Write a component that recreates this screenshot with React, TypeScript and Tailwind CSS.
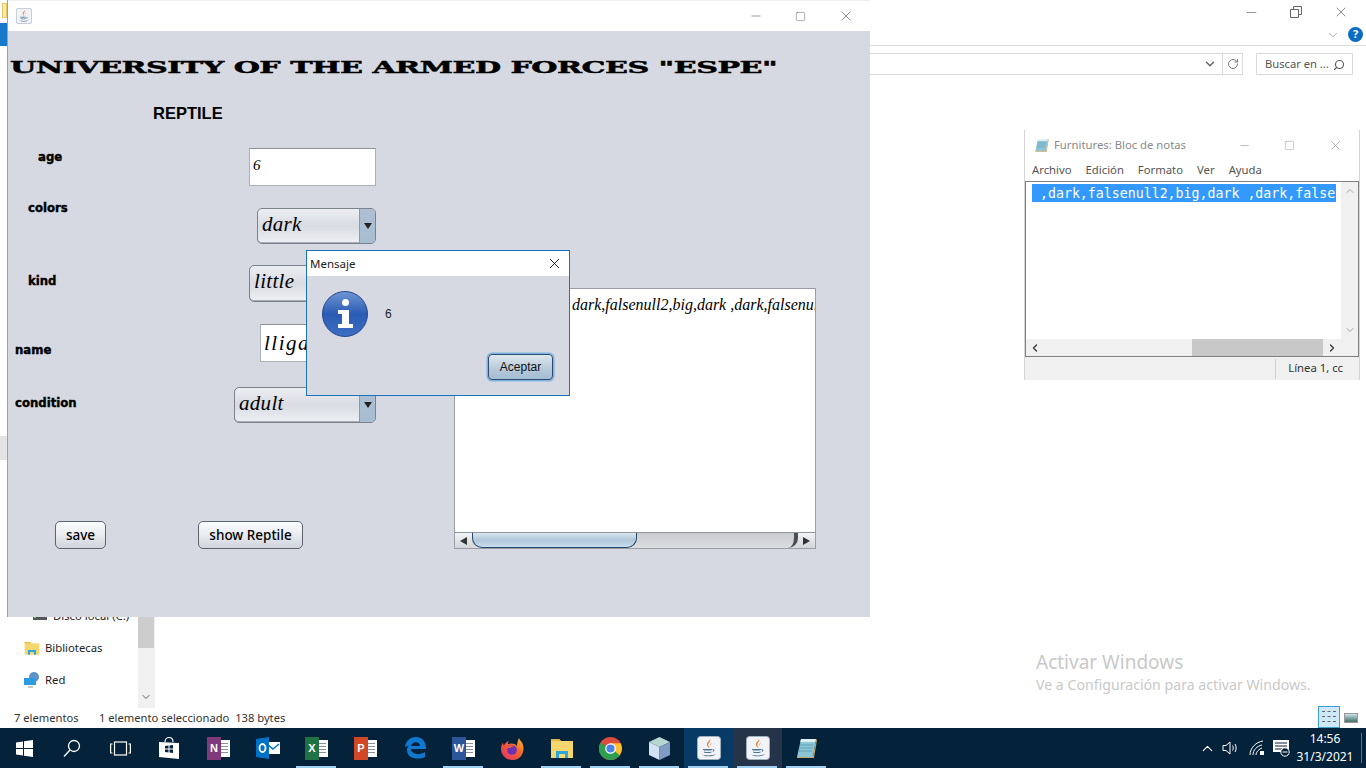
import React from 'react'
import { ChevronDown, ChevronLeft, ChevronRight, ChevronUp, Minus, RotateCw, Search, Square, X } from 'lucide-react'

const ui = "font-['Noto_Sans',sans-serif]"
const script = "font-['Liberation_Serif',serif] italic"
const heavy = "font-['DejaVu_Sans_Condensed','DejaVu_Sans',sans-serif] font-bold [-webkit-text-stroke:0.4px_black]"

const JavaIcon: React.FC<{ size?: number }> = ({ size = 24 }) => (
  <svg width={size} height={size} viewBox="0 0 24 24">
    <rect x="0.5" y="0.5" width="23" height="23" rx="3" fill="#f1f3f6" stroke="#9fb0bf" />
    <path d="M13 3c1.500 2.500-3 4-1.500 7 .4.800 1 1.300 1 2-1.500-1-3-2.500-2.500-4.500C10.500 5.500 13 5 13 3z" fill="#e8772e" />
    <path d="M15 6.500c-1.500 1-2 2-1.300 3.500-.1-1.300.5-2.300 1.300-3.500z" fill="#e8772e" />
    <path d="M6 13h9v1c-2 .8-7 .8-9 0zM7 15.500c2 .7 5.500.7 7.500 0v1c-2 .7-5.500.7-7.500 0zM5 18.500c3 1.300 10 1.300 14-.5-2 2.700-11 3.300-14 .5z" fill="#4b7396" />
    <path d="M15 13.500c3-.8 3.500 2-.5 3 2-1 2.300-2.500.5-3z" fill="#4b7396" />
  </svg>
)

const NotepadIcon: React.FC<{ size?: number }> = ({ size = 24 }) => (
  <svg width={size} height={size} viewBox="0 0 24 24">
    <path d="M6 3h15l-3 18H2z" fill="#8cc6d6" />
    <path d="M6 3h15l-.5 3H5.300z" fill="#dfeef2" />
    <path d="M21 3l1 1-3 18H2l0-1h16z" fill="#c9a566" />
    <path d="M5 9h13M4.500 12h13M4 15h13" stroke="#5ea2b6" strokeWidth="1" />
  </svg>
)

const FolderIcon: React.FC<{ size?: number }> = ({ size = 24 }) => (
  <svg width={size} height={size} viewBox="0 0 24 24">
    <path d="M1 3h8l2 2h12v17H1z" fill="#f6d76f" />
    <path d="M1 3h8l2 2H1z" fill="#e5b93f" />
    <path d="M6 22v-7h12v7h-3v-4H9v4z" fill="#29a8e0" />
  </svg>
)

const TaskbarIcons: React.FC = () => (
  <>
    <TaskSlot className="w-[48px]">
      <svg width="17" height="17" viewBox="0 0 17 17" fill="#fff">
        <path d="M0 2.500l7-1v6.500H0zM8 1.300L17 0v8H8zM0 9h7v6.500l-7-1zM8 9h9v8l-9-1.300z" />
      </svg>
    </TaskSlot>
    <TaskSlot className="w-[48px]">
      <svg width="18" height="18" viewBox="0 0 18 18" fill="none" stroke="#fff" strokeWidth="1.300">
        <circle cx="11" cy="7" r="5.500" />
        <path d="M7 11l-6 6.500" />
      </svg>
    </TaskSlot>
    <TaskSlot className="w-[48px]">
      <svg width="21" height="15" viewBox="0 0 21 15" fill="none" stroke="#fff" strokeWidth="1.200">
        <rect x="4.500" y="1" width="12" height="13" />
        <path d="M2.500 3H.6v9h1.900M18.500 3h1.900v9h-1.900" />
      </svg>
    </TaskSlot>
    <TaskSlot className="w-[50px]">
      <svg width="22" height="24" viewBox="0 0 22 24">
        <path d="M7 6c0-6 8-6 8 0" fill="none" stroke="#fff" strokeWidth="1.200" />
        <path d="M1 6l20 1v16L1 21z" fill="#fff" />
        <path d="M7 10l3.500-.5v3H7zM11.500 9.500L15 9v3.500h-3.500zM7 13.500h3.500v3L7 16zM11.500 13.500H15V17l-3.500-.5z" fill="#04223a" />
      </svg>
    </TaskSlot>
    <TaskSlot className="w-[49px]">
      <OfficeIcon dark="#80397b" letter="N" />
    </TaskSlot>
    <TaskSlot className="w-[49px]">
      <svg width="24" height="22" viewBox="0 0 24 22">
        <rect x="10" y="5" width="14" height="12" fill="#fff" />
        <path d="M11 7l6 5 6-5" fill="none" stroke="#0072c6" strokeWidth="1.500" />
        <path d="M0 2l13-2v22L0 20z" fill="#0072c6" />
        <ellipse cx="6.500" cy="11" rx="3" ry="4" fill="none" stroke="#fff" strokeWidth="1.800" />
      </svg>
    </TaskSlot>
    <TaskSlot className="w-[49px]" open>
      <OfficeIcon dark="#1f7244" letter="X" />
    </TaskSlot>
    <TaskSlot className="w-[49px]">
      <OfficeIcon dark="#d24726" letter="P" />
    </TaskSlot>
    <TaskSlot className="w-[49px]">
      <svg width="22" height="22" viewBox="0 0 22 22">
        <path d="M1 10C2 3 7 0 12 0c6 0 10 4 10 12H7c0 5 8 7 14 3v5c-7 3-17 2-18-6-.3-2 .5-4 2-6-1.500 1-3 2-4 2zm6-1h9c0-5-8-5-9 0z" fill="#0f79d0" />
      </svg>
    </TaskSlot>
    <TaskSlot className="w-[49px]" open>
      <OfficeIcon dark="#2b579a" letter="W" />
    </TaskSlot>
    <TaskSlot className="w-[49px]">
      <svg width="23" height="23" viewBox="0 0 23 23">
        <defs>
          <linearGradient id="ff" x1="0" y1="1" x2="1" y2="0">
            <stop offset="0" stopColor="#e6316b" />
            <stop offset="0.6" stopColor="#f4642c" />
            <stop offset="1" stopColor="#fdc62f" />
          </linearGradient>
        </defs>
        <path d="M18 1c.5 2 2 3 3.500 5.500C24 12 22 23 11.500 23 4 23 0 17 0 12c0-3 1-5 2-6.500 0 1.500.5 2.500 1 3C4 6 6 4.500 8 4c-1 1-1.500 2-1 3 3-1 7-1 9 2 0-3 1-6 2-8z" fill="url(#ff)" />
        <circle cx="11" cy="13" r="4.800" fill="#6d2fb5" />
        <path d="M6 11c2-2 5-3 8-2-2 0-4 1-5 2z" fill="#f4642c" />
      </svg>
    </TaskSlot>
    <TaskSlot className="w-[49px]" open>
      <FolderIcon />
    </TaskSlot>
    <TaskSlot className="w-[49px]" open>
      <svg width="23" height="23" viewBox="0 0 48 48">
        <circle cx="24" cy="24" r="24" fill="#dd4b3e" />
        <path d="M24 24L45 36A24 24 0 0 1 19 47.500z" fill="#2f9e4f" />
        <path d="M3 12A24 24 0 0 0 19 47.500L30 27z" fill="#2f9e4f" />
        <path d="M24 13h21a24 24 0 0 1-2 25L30 27z" fill="#fbc02d" />
        <circle cx="24" cy="24" r="11" fill="#fff" />
        <circle cx="24" cy="24" r="8.500" fill="#4a80e8" />
      </svg>
    </TaskSlot>
    <TaskSlot className="w-[49px]" open>
      <svg width="21" height="23" viewBox="0 0 21 23">
        <path d="M10.500 0L21 5l-10.500 5L0 5z" fill="#b6d6cf" />
        <path d="M0 5l10.500 5v13L0 18z" fill="#d4e0f4" />
        <path d="M21 5l-10.500 5v13L21 18z" fill="#7f9dc4" />
      </svg>
    </TaskSlot>
    <TaskSlot className="w-[49px] bg-[#083a66]" open>
      <JavaIcon />
    </TaskSlot>
    <TaskSlot className="w-[49px] bg-[#253448]" open>
      <JavaIcon />
    </TaskSlot>
    <TaskSlot className="w-[49px]" open>
      <NotepadIcon />
    </TaskSlot>
  </>
)

const TaskSlot: React.FC<{ className?: string; open?: boolean; children: React.ReactNode }> = ({
  className = '',
  open,
  children,
}) => (
  <div className={`h-full flex items-center justify-center shrink-0 relative ${className}`}>
    {children}
    {open && <span className="absolute bottom-0 left-[4px] right-[5px] h-[2px] bg-[#9fd0f2]" />}
  </div>
)

const OfficeIcon: React.FC<{ dark: string; letter: string }> = ({ dark, letter }) => (
  <div className="relative w-[23px] h-[23px]">
    <div className="absolute right-0 top-[3px] w-[15px] h-[17px] bg-white" />
    <div className="absolute right-[2px] top-[6px] w-[7px] h-[1px] bg-[#8a8f99]" />
    <div className="absolute right-[2px] top-[9px] w-[7px] h-[1px] bg-[#8a8f99]" />
    <div className="absolute right-[2px] top-[12px] w-[7px] h-[1px] bg-[#8a8f99]" />
    <div className="absolute right-[2px] top-[15px] w-[7px] h-[1px] bg-[#8a8f99]" />
    <div
      className="absolute left-0 top-0 w-[14px] h-[23px] flex items-center justify-center text-white text-[11px] font-bold font-['Liberation_Sans',sans-serif]"
      style={{ backgroundColor: dark }}
    >
      {letter}
    </div>
  </div>
)

const Taskbar: React.FC = () => (
  <div className="h-[40px] shrink-0 bg-[#04223a] flex items-center">
    <TaskbarIcons />
    <div className="flex-1" />
    <div className="flex items-center text-white">
      <ChevronUp size={17} strokeWidth={1.500} />
      <svg className="ml-[6px]" width="18" height="16" viewBox="0 0 18 16" fill="none" stroke="#fff" strokeWidth="1">
        <path d="M1 5.500h3L8 2v12l-4-3.500H1z" />
        <path d="M10.500 5.500c1 1.500 1 3.500 0 5M13 4c1.500 2.500 1.500 5.500 0 8" />
      </svg>
      <svg className="ml-[9px]" width="16" height="16" viewBox="0 0 16 16" fill="none" stroke="#fff" strokeWidth="1">
        <path d="M1 15C1 8 7 2 14 1M4 15c0-5 4-9 9-10M7 15c0-3 3-6 6-7" />
        <rect x="11" y="11" width="4" height="4" fill="#fff" stroke="none" />
      </svg>
      <svg className="ml-[8px]" width="17" height="17" viewBox="0 0 17 17">
        <path d="M0 0h16v12H0z" fill="#fff" />
        <path d="M2 3h12M2 6h12M2 9h8" stroke="#04223a" />
        <circle cx="12" cy="12" r="4.200" fill="#04223a" stroke="#fff" />
        <path d="M9.500 12h5" stroke="#fff" />
      </svg>
    </div>
    <div className={`w-[70px] text-center text-white text-[12px] leading-[18px] ${ui}`}>
      <div>14:56</div>
      <div>31/3/2021</div>
    </div>
    <div className="w-[1px] h-[30px] ml-[1px] mr-[4px] bg-[#5d7284]" />
  </div>
)

const ExplorerBackground: React.FC = () => (
  <div className={`flex-1 min-h-0 flex flex-col bg-white text-[12px] text-[#1e1e1e] ${ui}`}>
    <div className="h-[24px] flex items-center justify-end pr-[17px] gap-[31px] text-[#555]">
      <Minus size={15} strokeWidth={1} />
      <svg width="12" height="12" viewBox="0 0 12 12" fill="none" stroke="#666" strokeWidth="1">
        <path d="M.5 3.500h8v8h-8zM3.500 3.500v-3h8v8h-3" />
      </svg>
      <X size={16} strokeWidth={1} />
    </div>
    <div className="h-[22px] flex items-center justify-end pr-[3px] border-b border-[#dcdcdc] relative">
      <ChevronDown size={14} strokeWidth={1.200} className="text-[#888] mr-[8px]" />
      <span className="w-[15px] h-[15px] rounded-full bg-[#0b6cc4] text-white text-[11px] font-bold flex items-center justify-center">
        ?
      </span>
    </div>
    <div className="h-[22px] mt-[7px] flex shrink-0">
      <div className="ml-[870px] w-[373px] border border-l-0 border-[#d9d9d9] flex items-center justify-end">
        <ChevronDown size={14} strokeWidth={2.500} className="text-[#666] mr-[5px]" />
        <div className="w-[20px] h-full border-l border-[#d9d9d9] flex items-center justify-center">
          <RotateCw size={12} strokeWidth={2} className="text-[#777]" />
        </div>
      </div>
      <div className="ml-[13px] w-[97px] border border-[#d9d9d9] flex items-center justify-between pl-[8px] pr-[7px] pt-[1px] text-[#555] text-[11.200px]">
        <span className="whitespace-nowrap">Buscar en ...</span>
        <Search size={12} strokeWidth={2.200} className="-scale-x-100" />
      </div>
    </div>
    <div className="flex-1 min-h-0 flex justify-end flex-col">
      <div className="relative flex-1 min-h-0 flex">
        <div className="w-[155px] h-full relative flex flex-col justify-end border-r border-[#eeeeee] text-[11.300px]">
          <div className="flex items-center gap-[6px] pl-[33px] h-[32px]">
            <svg width="14" height="8" viewBox="0 0 14 8">
              <rect width="14" height="8" fill="#555" />
              <rect x="1" y="5" width="2" height="1" fill="#4fdc6e" />
            </svg>
            <span>Disco local (C:)</span>
          </div>
          <div className="flex items-center gap-[5px] pl-[24px] h-[32px]">
            <FolderIcon size={16} />
            <span>Bibliotecas</span>
          </div>
          <div className="flex items-center gap-[5px] pl-[24px] h-[32px] mb-[12px]">
            <svg width="16" height="16" viewBox="0 0 16 16">
              <circle cx="10" cy="5" r="5" fill="#5d93c9" />
              <rect x="0" y="6" width="12" height="7" fill="#2c9be0" />
              <path d="M4 15h5" stroke="#8a8a8a" />
            </svg>
            <span>Red</span>
          </div>
          <div className="absolute right-0 bottom-0 top-[500px] w-[16px] bg-[#f0f0f0] flex flex-col justify-between items-center">
            <div className="w-full h-[73px] bg-[#cdcdcd]" />
            <ChevronDown size={12} strokeWidth={2} className="text-[#606060] mb-[5px]" />
          </div>
        </div>
        <div className="flex-1 flex flex-col items-start justify-end pl-[881px] pb-[13px] text-[#c9c9c9] whitespace-nowrap">
          <div className="text-[19px] leading-[24px] -translate-y-[1px]">Activar Windows</div>
          <div className="text-[14.150px] leading-[20px]">Ve a Configuración para activar Windows.</div>
        </div>
      </div>
      <div className="h-[20px] shrink-0 flex items-center pl-[14px] text-[11.200px] text-[#333] relative">
        <span className="w-[85px]">7 elementos</span>
        <span>1 elemento seleccionado&nbsp;&nbsp;138 bytes</span>
        <div className="ml-auto mr-[3px] flex items-center gap-[4px]">
          <div className="w-[22px] h-[22px] -mt-[2px] bg-[#cfe8f7] border border-[#3d9fd6] flex flex-col justify-center gap-[3px] px-[3px]">
            <span className="h-[2px] border-t border-dashed border-[#666]" />
            <span className="h-[2px] border-t border-dashed border-[#666]" />
            <span className="h-[2px] border-t border-dashed border-[#666]" />
          </div>
          <div className="w-[14px] h-[10px] border border-[#999] bg-gradient-to-b from-[#cde3ef] to-[#3f6f66] mr-[5px]" />
        </div>
      </div>
    </div>
  </div>
)

const ComboBox: React.FC<{ value: string; className: string }> = ({ value, className }) => (
  <div
    className={`flex rounded-[5px] border border-[#7c828c] overflow-hidden bg-gradient-to-b from-[#eceef2] via-[#d8dbe2] to-[#eef0f4] shadow-[inset_0_-1px_0_#a7acb6] ${className}`}
  >
    <span className={`flex-1 pl-[4px] text-[21px] leading-[30px] tracking-[0.3px] text-black [-webkit-text-stroke:0px] ${script}`}>{value}</span>
    <span className="w-[16px] border-l border-[#8b99a9] bg-gradient-to-b from-[#aebfd2] to-[#a7bdd1] flex items-center justify-center">
      <span className="w-0 h-0 border-x-[4px] border-x-transparent border-t-[6px] border-t-[#222]" />
    </span>
  </div>
)

const TextBox: React.FC<{ value: string; className: string }> = ({ value, className }) => (
  <div className={`bg-white border border-[#adb0b6] border-t-[#8e9197] pl-[3px] text-black overflow-hidden [-webkit-text-stroke:0px] ${script} ${className}`}>
    {value}
  </div>
)

const FormButton: React.FC<{ label: string; className: string }> = ({ label, className }) => (
  <button
    type="button"
    className={`h-[28px] pt-[1px] rounded-[5px] border border-[#5f656f] bg-gradient-to-b from-[#fbfcfd] via-[#e9ebef] to-[#cfd3db] text-[13.500px] font-medium text-black font-['Noto_Sans',sans-serif] ${className}`}
  >
    {label}
  </button>
)

const InfoDialog: React.FC = () => (
  <div className="absolute left-[298px] top-[250px] w-[264px] h-[146px] border border-[#1a73b8] bg-[#d6d9e1] flex flex-col font-['Liberation_Sans',sans-serif]">
    <div className="h-[25px] bg-white shrink-0 flex items-center justify-between pl-[3px] pr-[6px] text-[11.500px] text-[#222]">
      <span className={ui}>Mensaje</span>
      <X size={17} strokeWidth={1.200} className="text-black" />
    </div>
    <div className="flex items-start pl-[15px] pt-[15px]">
      <svg width="46" height="46" viewBox="0 0 46 46">
        <defs>
          <linearGradient id="inf" x1="0" y1="0" x2="0" y2="1">
            <stop offset="0" stopColor="#6f95d4" />
            <stop offset="0.5" stopColor="#2b5cb3" />
            <stop offset="1" stopColor="#3c6ec2" />
          </linearGradient>
        </defs>
        <circle cx="23" cy="23" r="22.500" fill="url(#inf)" stroke="#24478f" />
        <circle cx="23.500" cy="11.500" r="3.500" fill="#fff" />
        <path d="M16 19h11v14h4v4H16v-4h4V23h-4z" fill="#fff" />
      </svg>
      <span className="ml-[17px] mt-[14px] text-[12px] text-[#222]">6</span>
    </div>
    <div className="flex justify-end pr-[16px] mt-[17px]">
      <button
        type="button"
        className="w-[65px] h-[26px] rounded-[4px] border border-[#2c4d72] bg-gradient-to-b from-[#dfe7ef] via-[#bccddd] to-[#a3bbd1] shadow-[0_0_0_1.500px_#7fb2e0] text-[12px] text-[#111]"
      >
        Aceptar
      </button>
    </div>
  </div>
)

const JavaWindow: React.FC = () => (
  <div className="absolute left-[7px] top-0 w-[863px] h-[617px] border-l border-[#a0a0a0] flex flex-col bg-[#d6d9e1]">
    <div className="h-[31px] shrink-0 bg-white flex items-center pl-[8px] pr-[16px] border-t border-[#f0f0f0]">
      <JavaIcon size={16} />
      <div className="ml-auto flex items-center gap-[32px] text-[#555]">
        <Minus size={14} strokeWidth={1} />
        <Square size={11} strokeWidth={1} />
        <X size={16} strokeWidth={1} />
      </div>
    </div>
    <div className="h-[20px] mt-[24px] pl-[2px] whitespace-nowrap">
      <div className="inline-block origin-left scale-x-[1.72] font-['DejaVu_Serif',serif] font-bold text-[17.500px] leading-[20px] tracking-[-0.3px] text-black [-webkit-text-stroke:0.5px_black]">
        UNIVERSITY OF THE ARMED FORCES "ESPE"
      </div>
    </div>
    <div className="flex mt-[27px]">
      <div className="w-[446px] shrink-0 pr-[78px] flex flex-col">
        <div className="ml-[145px] h-[20px] mt-[1px] font-['Liberation_Sans',sans-serif] font-bold text-[16.500px] leading-[20px] text-black">
          REPTILE
        </div>
        <div className={`flex h-[38px] mt-[25px] text-[13px] leading-[16px] text-black ${heavy}`}>
          <span className="ml-[30px] mt-[1px]">age</span>
          <TextBox value="6" className="ml-auto w-[127px] font-normal text-[15px] leading-[32px]" />
        </div>
        <div className={`flex h-[36px] mt-[22px] text-[13px] leading-[16px] text-black ${heavy}`}>
          <span className="ml-[20px] -mt-[8px]">colors</span>
          <ComboBox value="dark" className="ml-auto w-[119px] font-normal" />
        </div>
        <div className={`flex h-[37px] mt-[21px] text-[13px] leading-[16px] text-black ${heavy}`}>
          <span className="ml-[20px] mt-[8px]">kind</span>
          <ComboBox value="little" className="ml-auto w-[127px] font-normal" />
        </div>
        <div className={`flex h-[38px] mt-[22px] text-[13px] leading-[16px] text-black ${heavy}`}>
          <span className="ml-[7px] mt-[18px]">name</span>
          <TextBox value="lligator" className="ml-auto w-[116px] font-normal text-[21px] tracking-[1.500px] leading-[36px]" />
        </div>
        <div className={`flex h-[36px] mt-[25px] text-[13px] leading-[16px] text-black ${heavy}`}>
          <span className="ml-[7px] mt-[8px]">condition</span>
          <ComboBox value="adult" className="ml-auto w-[142px] font-normal" />
        </div>
        <div className="flex mt-[98px]">
          <FormButton label="save" className="ml-[47px] w-[51px]" />
          <FormButton label="show Reptile" className="ml-[92px] w-[105px]" />
        </div>
      </div>
      <div className="w-[362px] h-[261px] mt-[186px] border border-[#9a9da6] bg-white flex flex-col">
        <div className={`flex-1 min-h-0 overflow-hidden whitespace-nowrap pl-[117px] pt-[4px] text-[16px] text-black ${script}`}>
          dark,falsenull2,big,dark ,dark,falsenull2,big,dark
        </div>
        <div className="h-[16px] shrink-0 flex border-t border-[#8f939b] bg-gradient-to-b from-[#c9cbd0] to-[#dcdde0]">
          <div className="w-[17px] bg-gradient-to-b from-[#f2f3f5] to-[#d3d5da] flex items-center justify-center">
            <span className="w-0 h-0 border-y-[4px] border-y-transparent border-r-[7px] border-r-[#333]" />
          </div>
          <div className="w-[165px] rounded-b-[10px] border border-t-0 border-[#24496b] bg-gradient-to-b from-[#d9e7f0] via-[#b0c6d8] to-[#c9dfee]" />
          <div className="flex-1 rounded-br-[10px] border-r-[4px] border-r-[#4a4d52]" />
          <div className="w-[17px] bg-gradient-to-b from-[#f2f3f5] to-[#d3d5da] flex items-center justify-center">
            <span className="w-0 h-0 border-y-[4px] border-y-transparent border-l-[7px] border-l-[#333]" />
          </div>
        </div>
      </div>
    </div>
    <InfoDialog />
  </div>
)

const NotepadWindow: React.FC = () => (
  <div className={`absolute left-[1024px] top-[130px] w-[336px] h-[250px] bg-white border-x border-[#d5d5d5] flex flex-col text-[11.300px] ${ui}`}>
    <div className="h-[30px] shrink-0 flex items-center pl-[9px] pr-[16px] text-[#8a8a8a]">
      <NotepadIcon size={16} />
      <span className="ml-[4px]">Furnitures: Bloc de notas</span>
      <div className="ml-auto flex items-center gap-[33px] text-[#888]">
        <Minus size={13} strokeWidth={1} />
        <Square size={11} strokeWidth={1} />
        <X size={15} strokeWidth={1} />
      </div>
    </div>
    <div className="h-[21px] shrink-0 flex items-center gap-[14px] pl-[7px] text-[#555]">
      <span>Archivo</span>
      <span>Edición</span>
      <span>Formato</span>
      <span>Ver</span>
      <span>Ayuda</span>
    </div>
    <div className="h-[176px] shrink-0 border border-[#7f7f7f] flex flex-col">
      <div className="flex-1 min-h-0 flex">
        <div className="flex-1 min-w-0 pl-[6px] pt-[2px]">
          <div className="w-[304px] h-[18px] bg-[#3399ff] text-white text-[13.250px] leading-[19px] whitespace-pre overflow-hidden font-['DejaVu_Sans_Mono',monospace]">
            {' ,dark,falsenull2,big,dark ,dark,false'}
          </div>
        </div>
        <div className="w-[17px] bg-[#f0f0f0] flex flex-col justify-between items-center py-[3px] text-[#a8a8a8]">
          <ChevronUp size={12} strokeWidth={2} />
          <ChevronDown size={12} strokeWidth={2} />
        </div>
      </div>
      <div className="h-[17px] shrink-0 bg-[#f0f0f0] flex items-center text-[#333]">
        <ChevronLeft size={12} strokeWidth={2.500} className="ml-[3px]" />
        <div className="ml-[151px] w-[131px] h-full bg-[#c8c8c8]" />
        <ChevronRight size={12} strokeWidth={2.500} className="ml-[3px]" />
      </div>
    </div>
    <div className="flex-1 bg-[#f0f0f0] flex items-center justify-end text-[#333] text-[11.300px] pr-[16px]">
      <div className="w-[1px] h-[20px] bg-[#d0d0d0] mr-[12px]" />
      <span>Línea 1, cc</span>
    </div>
  </div>
)

export default function App() {
  return (
    <div className="relative w-[1366px] h-screen overflow-hidden flex flex-col bg-white">
      <ExplorerBackground />
      <Taskbar />
      {/* bits of the explorer window that stick out left of the java frame */}
      <div className="absolute left-[2px] top-[3px] w-[5px] h-[15px] bg-[#fde9a8] border border-[#e5c765]" />
      <div className="absolute left-0 top-[23px] w-[7px] h-[23px] bg-[#1979ca]" />
      <div className="absolute left-0 top-[436px] w-[7px] h-[24px] bg-[#e3e3e3]" />
      <JavaWindow />
      <NotepadWindow />
    </div>
  )
}
